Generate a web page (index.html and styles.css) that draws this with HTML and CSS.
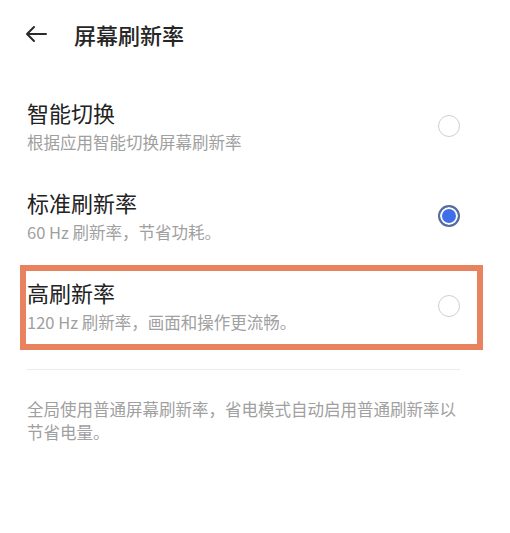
FILE: index.html
```html
<!DOCTYPE html>
<html lang="zh-CN">
<head>
    <meta charset="UTF-8">
    <meta name="viewport" content="width=device-width, initial-scale=1.0">
    <title>屏幕刷新率</title>
    <link rel="stylesheet" href="styles.css">
</head>
<body>
    <div class="page">
        <header class="topbar">
            <svg class="back" width="24" height="24" viewBox="0 0 24 24">
                <path d="M22 12H3M10 5l-7 7 7 7" fill="none" stroke="#2a2a2a" stroke-width="2" stroke-linecap="round" stroke-linejoin="round"/>
            </svg>
            <h1>屏幕刷新率</h1>
        </header>

        <main class="content">
            <ul class="options">
                <li class="option">
                    <div class="option-text">
                        <span class="option-title">智能切换</span>
                        <span class="option-desc">根据应用智能切换屏幕刷新率</span>
                    </div>
                    <span class="radio"></span>
                </li>
                <li class="option">
                    <div class="option-text">
                        <span class="option-title">标准刷新率</span>
                        <span class="option-desc">60 Hz 刷新率，节省功耗。</span>
                    </div>
                    <span class="radio checked"></span>
                </li>
                <li class="option highlight">
                    <div class="option-text">
                        <span class="option-title">高刷新率</span>
                        <span class="option-desc">120 Hz 刷新率，画面和操作更流畅。</span>
                    </div>
                    <span class="radio"></span>
                </li>
            </ul>

            <div class="divider"></div>

            <p class="note">全局使用普通屏幕刷新率，省电模式自动启用普通刷新率以节省电量。</p>
        </main>
    </div>
</body>
</html>
```

FILE: styles.css
```css
* {
    margin: 0;
    padding: 0;
    box-sizing: border-box;
}

body {
    background-color: #fff;
    color: #222;
    font-family: 'Noto Sans CJK SC', 'Noto Sans', sans-serif;
}

.page {
    width: 510px;
    height: 533px;
    overflow: hidden;
}

.topbar {
    display: flex;
    align-items: center;
    height: 68px;
    padding-left: 24px;
}

.back {
    margin-right: 26px;
}

.topbar h1 {
    font-size: 22px;
    font-weight: 500;
    color: #262626;
}

.content {
    padding: 12px 50px 0 27px;
}

.options {
    list-style: none;
}

.option {
    position: relative;
    display: flex;
    align-items: center;
    justify-content: space-between;
    height: 90px;
}

.option-text {
    display: flex;
    flex-direction: column;
    gap: 5px;
}

.option-title {
    font-size: 22px;
    line-height: 28px;
    color: #222;
}

.option-desc {
    font-size: 16.5px;
    line-height: 22px;
    color: #a0a0a0;
}

.radio {
    width: 22px;
    height: 22px;
    border-radius: 50%;
    border: 1.5px solid #cfcfcf;
    margin-top: 1px;
}

.radio.checked {
    border: 2px solid #5a6c96;
    background-color: #3f6fe8;
    box-shadow: inset 0 0 0 2px #fff;
}

.option.highlight::after {
    content: '';
    position: absolute;
    top: 5px;
    bottom: 0;
    left: -7px;
    right: -23px;
    border: 6px solid #e8825f;
}

.divider {
    height: 1px;
    background-color: #ececec;
    margin-top: 19px;
}

.note {
    margin-top: 28px;
    font-size: 16.5px;
    line-height: 23px;
    color: #a0a0a0;
}
```
